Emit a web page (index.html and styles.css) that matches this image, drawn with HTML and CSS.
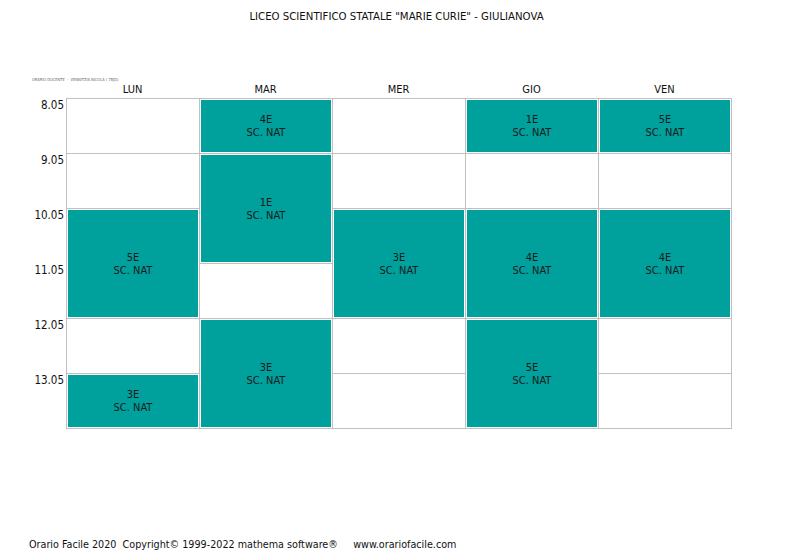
FILE: index.html
```html
<!DOCTYPE html>
<html lang="it">
<head>
<meta charset="utf-8">
<title>Orario</title>
<link rel="stylesheet" href="styles.css">
</head>
<body>
<div class="page">
  <h1 class="title">LICEO SCIENTIFICO STATALE "MARIE CURIE" - GIULIANOVA</h1>
  <div class="note">ORARIO DOCENTE &nbsp;-&nbsp; VENNITZIA NICOLA ( 7BJD)</div>
  <div class="days">
    <div class="day">LUN</div>
    <div class="day">MAR</div>
    <div class="day">MER</div>
    <div class="day">GIO</div>
    <div class="day">VEN</div>
  </div>
  <div class="schedule">
    <div class="times">
      <div class="time">8.05</div>
      <div class="time">9.05</div>
      <div class="time">10.05</div>
      <div class="time">11.05</div>
      <div class="time">12.05</div>
      <div class="time">13.05</div>
    </div>
    <div class="grid">
      <!-- LUN -->
      <div class="cell c1 r1"></div>
      <div class="cell c1 r2"></div>
      <div class="cell c1 r3 span2"><div class="lesson">5E<br>SC. NAT</div></div>
      <div class="cell c1 r5"></div>
      <div class="cell c1 r6"><div class="lesson">3E<br>SC. NAT</div></div>
      <!-- MAR -->
      <div class="cell c2 r1"><div class="lesson">4E<br>SC. NAT</div></div>
      <div class="cell c2 r2 span2"><div class="lesson">1E<br>SC. NAT</div></div>
      <div class="cell c2 r4"></div>
      <div class="cell c2 r5 span2"><div class="lesson">3E<br>SC. NAT</div></div>
      <!-- MER -->
      <div class="cell c3 r1"></div>
      <div class="cell c3 r2"></div>
      <div class="cell c3 r3 span2"><div class="lesson">3E<br>SC. NAT</div></div>
      <div class="cell c3 r5"></div>
      <div class="cell c3 r6"></div>
      <!-- GIO -->
      <div class="cell c4 r1"><div class="lesson">1E<br>SC. NAT</div></div>
      <div class="cell c4 r2"></div>
      <div class="cell c4 r3 span2"><div class="lesson">4E<br>SC. NAT</div></div>
      <div class="cell c4 r5 span2"><div class="lesson">5E<br>SC. NAT</div></div>
      <!-- VEN -->
      <div class="cell c5 r1"><div class="lesson">5E<br>SC. NAT</div></div>
      <div class="cell c5 r2"></div>
      <div class="cell c5 r3 span2"><div class="lesson">4E<br>SC. NAT</div></div>
      <div class="cell c5 r5"></div>
      <div class="cell c5 r6"></div>
    </div>
  </div>
  <footer class="footer">Orario Facile 2020&nbsp; Copyright© 1999-2022 mathema software®&nbsp;&nbsp;&nbsp;&nbsp; www.orariofacile.com</footer>
</div>
</body>
</html>
```
FILE: styles.css
```css
html, body {
  margin: 0;
  padding: 0;
  background: #ffffff;
}
.page {
  width: 793px;
  height: 559px;
  font-family: "DejaVu Sans Condensed", "DejaVu Sans", sans-serif;
  font-stretch: condensed;
  font-size: 11px;
  color: #111111;
  overflow: hidden;
}
.title {
  margin: 0;
  padding-top: 10px;
  height: 13px;
  line-height: 13px;
  font-size: 11.3px;
  font-weight: normal;
  text-align: center;
}
.note {
  margin: 53px 0 0 32px;
  height: 7px;
  line-height: 7px;
  font-size: 4px;
  color: #666666;
}
.days {
  display: grid;
  grid-template-columns: repeat(5, 133px);
  margin-left: 66px;
  height: 15px;
}
.day {
  text-align: center;
  line-height: 13px;
}
.schedule {
  display: flex;
}
.times {
  width: 64px;
  padding-right: 2px;
  display: grid;
  grid-template-rows: repeat(6, 55px);
  padding-top: 1px;
}
.time {
  text-align: right;
  font-size: 11.5px;
  line-height: 12px;
}
.grid {
  display: grid;
  grid-template-columns: repeat(5, 133px);
  grid-template-rows: repeat(6, 55px);
  border-left: 1px solid #c0c0c0;
  border-top: 1px solid #c0c0c0;
}
.cell {
  border-right: 1px solid #c0c0c0;
  border-bottom: 1px solid #c0c0c0;
  padding: 1px;
  display: flex;
}
.c1 { grid-column: 1; }
.c2 { grid-column: 2; }
.c3 { grid-column: 3; }
.c4 { grid-column: 4; }
.c5 { grid-column: 5; }
.r1 { grid-row: 1; }
.r2 { grid-row: 2; }
.r3 { grid-row: 3; }
.r4 { grid-row: 4; }
.r5 { grid-row: 5; }
.r6 { grid-row: 6; }
.r2.span2 { grid-row: 2 / span 2; }
.r3.span2 { grid-row: 3 / span 2; }
.r5.span2 { grid-row: 5 / span 2; }
.lesson {
  flex: 1;
  background: #00a09c;
  display: flex;
  align-items: center;
  justify-content: center;
  text-align: center;
  line-height: 13px;
  color: #1a1a1a;
}
.footer {
  margin-top: 109px;
  margin-left: 29px;
  line-height: 13px;
  font-size: 10.7px;
}
```
